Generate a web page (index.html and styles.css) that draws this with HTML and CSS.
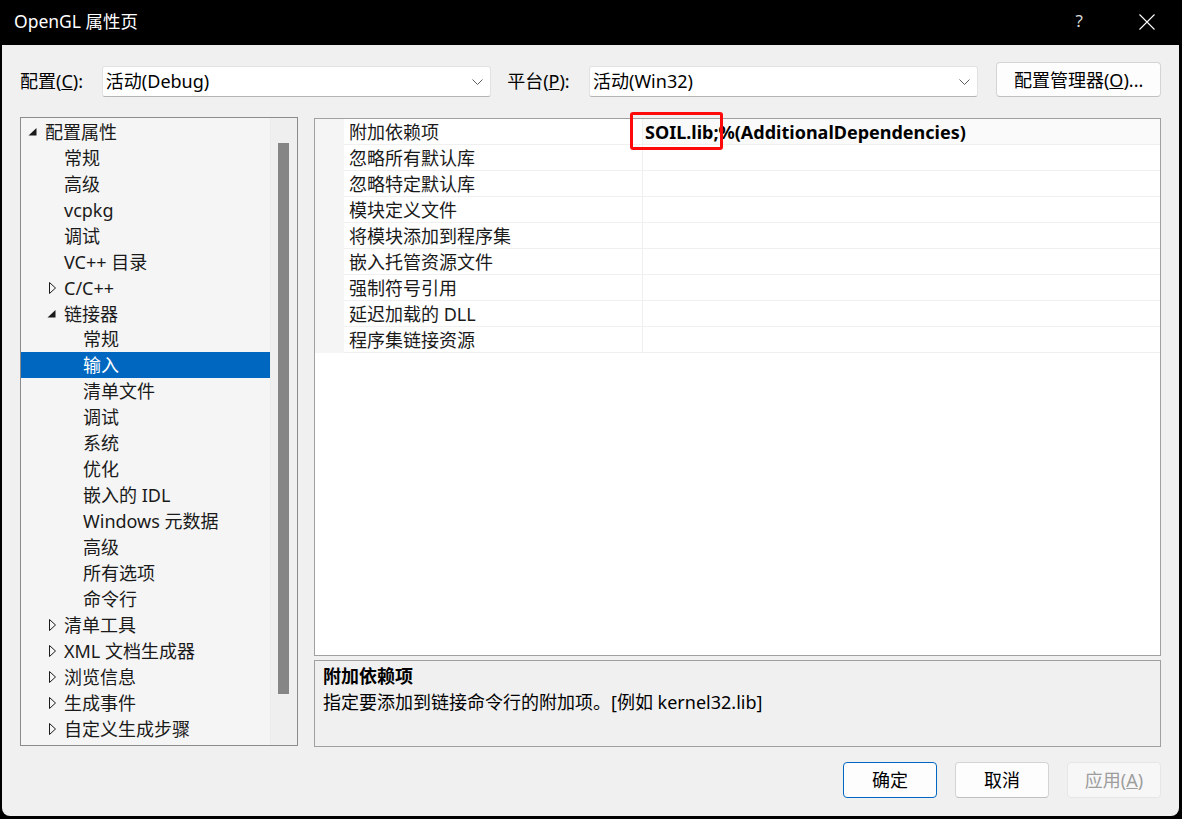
FILE: index.html
```html
<!DOCTYPE html>
<html lang="zh-CN">
<head>
<meta charset="utf-8">
<title>OpenGL 属性页</title>
<link rel="stylesheet" href="styles.css">
</head>
<body>
<div class="window">
  <div class="titlebar">
    <span class="title">OpenGL 属性页</span>
    <div class="tb-btns">
      <span class="tb-help">?</span>
      <span class="tb-close"><svg width="16" height="16" viewBox="0 0 16 16"><path d="M0.5 0.5 L15.5 15.5 M15.5 0.5 L0.5 15.5" stroke="#fff" stroke-width="1.1" fill="none"/></svg></span>
    </div>
  </div>
  <div class="content">
    <div class="config-row">
      <label class="cfg-label">配置(<u>C</u>):</label>
      <div class="combo"><span>活动(Debug)</span><svg class="chev" width="11" height="6" viewBox="0 0 11 6"><path d="M0.5 0.5 L5.5 5.5 L10.5 0.5" stroke="#5d5d5d" fill="none" stroke-width="1"/></svg></div>
      <label class="cfg-label">平台(<u>P</u>):</label>
      <div class="combo"><span>活动(Win32)</span><svg class="chev" width="11" height="6" viewBox="0 0 11 6"><path d="M0.5 0.5 L5.5 5.5 L10.5 0.5" stroke="#5d5d5d" fill="none" stroke-width="1"/></svg></div>
      <button class="btn btn-mgr">配置管理器(<u>O</u>)...</button>
    </div>

    <div class="main">
      <div class="tree">
        <div class="tree-list">
          <div class="node l0"><span class="tog"><svg width="9" height="8" viewBox="0 0 9 8"><path d="M8.5 0 L8.5 7.5 L0.5 7.5 Z" fill="#1a1a1a"/></svg></span>配置属性</div>
          <div class="node l1"><span class="tog"></span>常规</div>
          <div class="node l1"><span class="tog"></span>高级</div>
          <div class="node l1"><span class="tog"></span>vcpkg</div>
          <div class="node l1"><span class="tog"></span>调试</div>
          <div class="node l1"><span class="tog"></span>VC++ 目录</div>
          <div class="node l1"><span class="tog"><svg class="col" width="8" height="12" viewBox="0 0 8 12"><path d="M0.5 0.5 L6.5 6 L0.5 11.5 Z" stroke="#1a1a1a" fill="none" stroke-width="1"/></svg></span>C/C++</div>
          <div class="node l1"><span class="tog"><svg width="9" height="8" viewBox="0 0 9 8"><path d="M8.5 0 L8.5 7.5 L0.5 7.5 Z" fill="#1a1a1a"/></svg></span>链接器</div>
          <div class="node l2"><span class="tog"></span>常规</div>
          <div class="node l2 selected"><span class="tog"></span>输入</div>
          <div class="node l2"><span class="tog"></span>清单文件</div>
          <div class="node l2"><span class="tog"></span>调试</div>
          <div class="node l2"><span class="tog"></span>系统</div>
          <div class="node l2"><span class="tog"></span>优化</div>
          <div class="node l2"><span class="tog"></span>嵌入的 IDL</div>
          <div class="node l2"><span class="tog"></span>Windows 元数据</div>
          <div class="node l2"><span class="tog"></span>高级</div>
          <div class="node l2"><span class="tog"></span>所有选项</div>
          <div class="node l2"><span class="tog"></span>命令行</div>
          <div class="node l1"><span class="tog"><svg class="col" width="8" height="12" viewBox="0 0 8 12"><path d="M0.5 0.5 L6.5 6 L0.5 11.5 Z" stroke="#1a1a1a" fill="none" stroke-width="1"/></svg></span>清单工具</div>
          <div class="node l1"><span class="tog"><svg class="col" width="8" height="12" viewBox="0 0 8 12"><path d="M0.5 0.5 L6.5 6 L0.5 11.5 Z" stroke="#1a1a1a" fill="none" stroke-width="1"/></svg></span>XML 文档生成器</div>
          <div class="node l1"><span class="tog"><svg class="col" width="8" height="12" viewBox="0 0 8 12"><path d="M0.5 0.5 L6.5 6 L0.5 11.5 Z" stroke="#1a1a1a" fill="none" stroke-width="1"/></svg></span>浏览信息</div>
          <div class="node l1"><span class="tog"><svg class="col" width="8" height="12" viewBox="0 0 8 12"><path d="M0.5 0.5 L6.5 6 L0.5 11.5 Z" stroke="#1a1a1a" fill="none" stroke-width="1"/></svg></span>生成事件</div>
          <div class="node l1"><span class="tog"><svg class="col" width="8" height="12" viewBox="0 0 8 12"><path d="M0.5 0.5 L6.5 6 L0.5 11.5 Z" stroke="#1a1a1a" fill="none" stroke-width="1"/></svg></span>自定义生成步骤</div>
        </div>
        <div class="scrollbar"><div class="thumb"></div></div>
      </div>

      <div class="right">
        <div class="grid">
          <div class="prow first"><span class="gut"></span><span class="pname">附加依赖项</span><span class="pval">SOIL.lib;%(AdditionalDependencies)</span></div>
          <div class="prow"><span class="gut"></span><span class="pname">忽略所有默认库</span><span class="pval"></span></div>
          <div class="prow"><span class="gut"></span><span class="pname">忽略特定默认库</span><span class="pval"></span></div>
          <div class="prow"><span class="gut"></span><span class="pname">模块定义文件</span><span class="pval"></span></div>
          <div class="prow"><span class="gut"></span><span class="pname">将模块添加到程序集</span><span class="pval"></span></div>
          <div class="prow"><span class="gut"></span><span class="pname">嵌入托管资源文件</span><span class="pval"></span></div>
          <div class="prow"><span class="gut"></span><span class="pname">强制符号引用</span><span class="pval"></span></div>
          <div class="prow"><span class="gut"></span><span class="pname">延迟加载的 DLL</span><span class="pval"></span></div>
          <div class="prow"><span class="gut"></span><span class="pname">程序集链接资源</span><span class="pval"></span></div>
          <div class="mark"></div>
        </div>
        <div class="desc">
          <div class="desc-title">附加依赖项</div>
          <div class="desc-text">指定要添加到链接命令行的附加项。[例如 kernel32.lib]</div>
        </div>
      </div>
    </div>

    <div class="footer">
      <button class="btn btn-ok">确定</button>
      <button class="btn">取消</button>
      <button class="btn btn-disabled">应用(<u>A</u>)</button>
    </div>
  </div>
</div>
</body>
</html>
```

FILE: styles.css
```css
* { box-sizing: border-box; }

html, body {
  margin: 0;
  padding: 0;
  background: #000;
  width: 1182px;
  height: 819px;
  overflow: hidden;
}

body {
  font-family: "Noto Sans", "Noto Sans CJK SC", sans-serif;
  font-size: 18px;
  color: #1a1a1a;
}

.window {
  margin-left: 2px;
  width: 1177px;
  height: 816px;
  border-radius: 0 0 8px 8px;
  overflow: hidden;
  background: #f0f0f0;
  display: flex;
  flex-direction: column;
}

.titlebar {
  height: 45px;
  background: #000;
  color: #fff;
  display: flex;
  align-items: center;
  padding-left: 12px;
  flex: none;
}

.title {
  font-size: 17.5px;
  line-height: 45px;
  padding-bottom: 2px;
}

.tb-btns {
  margin-left: auto;
  display: flex;
  align-items: center;
}

.tb-help {
  color: #d8d8d8;
  font-size: 17px;
  line-height: 20px;
  margin-right: 56px;
  padding-bottom: 4px;
}

.tb-close {
  display: flex;
  margin-right: 24px;
  margin-bottom: 2px;
}

.content {
  flex: 1;
  padding: 17px 18px 0 18px;
  display: flex;
  flex-direction: column;
}

.config-row {
  display: flex;
  align-items: flex-start;
  height: 35px;
}

.cfg-label {
  width: 82px;
  line-height: 31px;
  margin-top: 4px;
  color: #000;
}

.combo {
  width: 390px;
  height: 31px;
  margin-top: 4px;
  margin-right: 16px;
  background: #fff;
  border: 1px solid #e2e2e2;
  border-bottom-color: #b5b5b5;
  border-radius: 3px;
  display: flex;
  align-items: center;
  padding-left: 3px;
  color: #000;
  line-height: 29px;
}

.combo .chev {
  margin-left: auto;
  margin-right: 7px;
}

.btn {
  font-family: "Noto Sans", "Noto Sans CJK SC", sans-serif;
  font-size: 18px;
  color: #000;
  background: #fdfdfd;
  border: 1px solid #d4d4d4;
  border-bottom-color: #c0c0c0;
  border-radius: 4px;
  padding: 0;
  width: 94px;
  height: 36px;
  line-height: 34px;
}

.btn-mgr {
  width: 165px;
  height: 35px;
  margin-left: 2px;
}

.main {
  display: flex;
  margin-top: 20px;
  height: 630px;
  gap: 16px;
}

.tree {
  width: 278px;
  height: 629px;
  border: 1px solid #8c8c8c;
  background: #f5f5f5;
  display: flex;
}

.tree-list {
  width: 249px;
  padding-top: 1px;
}

.node {
  height: 25.95px;
  line-height: 26px;
  display: flex;
  align-items: center;
  white-space: nowrap;
  color: #1a1a1a;
}

.node.l0 { padding-left: 6px; }
.node.l1 { padding-left: 25px; }
.node.l2 { padding-left: 44px; }

.tog {
  width: 18px;
  flex: none;
  display: flex;
  align-items: center;
  padding-left: 1px;
}

.tog svg.col {
  margin-left: 2px;
}

.node.selected {
  background: #0067c0;
  color: #fff;
}

.scrollbar {
  width: 27px;
  background: #efefef;
  border-left: 1px solid #ececec;
  position: relative;
}

.thumb {
  position: absolute;
  left: 7px;
  top: 25px;
  width: 11px;
  height: 551px;
  background: #868686;
}

.right {
  width: 849px;
  margin-top: 1px;
  display: flex;
  flex-direction: column;
  gap: 4px;
}

.grid {
  height: 538px;
  border: 1px solid #a0a0a0;
  background: #fff;
  position: relative;
}

.prow {
  display: flex;
  height: 26px;
  color: #1a1a1a;
}

.gut {
  width: 29px;
  background: #f5f5f5;
  flex: none;
}

.pname {
  width: 299px;
  flex: none;
  padding-left: 5px;
  padding-top: 2px;
  line-height: 23px;
  border-bottom: 1px solid #f0f0f0;
  border-right: 1px solid #efefef;
  white-space: nowrap;
}

.pval {
  flex: 1;
  padding-left: 2px;
  padding-top: 2px;
  line-height: 23px;
  border-bottom: 1px solid #f0f0f0;
  white-space: nowrap;
}

.prow.first .pval {
  background: #fafafa;
  font-weight: 700;
  color: #000;
}

.mark {
  position: absolute;
  left: 315px;
  top: -7px;
  width: 93px;
  height: 38px;
  border: 3px solid #ff0a0a;
  border-radius: 3px;
}

.desc {
  height: 87px;
  border: 1px solid #a0a0a0;
  background: #f0f0f0;
  padding: 2px 8px 0 8px;
  color: #000;
}

.desc-title {
  font-weight: 700;
  line-height: 26px;
}

.desc-text {
  line-height: 26px;
}

.footer {
  display: flex;
  justify-content: flex-end;
  gap: 18px;
  margin-top: 15px;
  padding-right: 0;
}

.btn-ok {
  border: 1px solid #0067c0;
}

.btn-disabled {
  color: #9d9d9d;
  background: #f7f7f7;
  border: 1px solid #e6e6e6;
}
```
